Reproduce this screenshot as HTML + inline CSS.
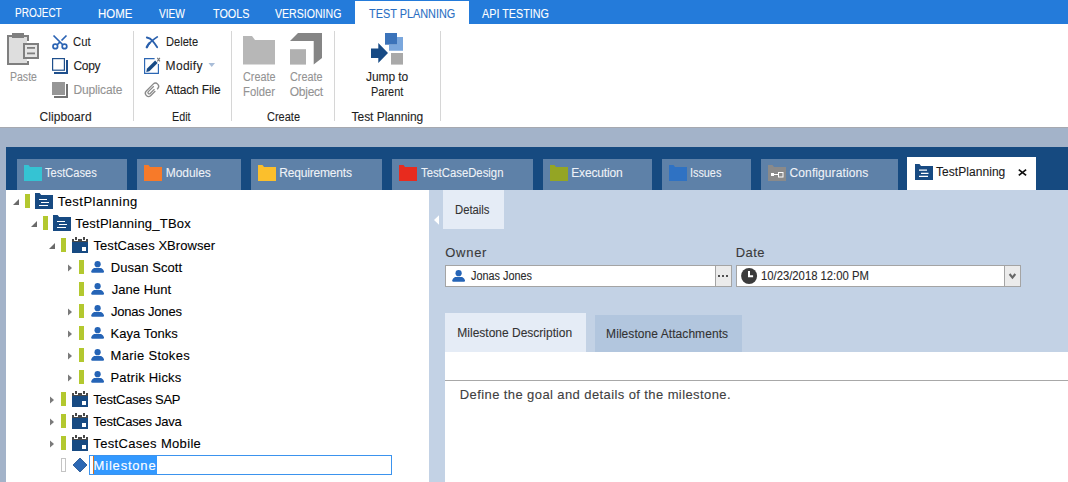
<!DOCTYPE html>
<html><head><meta charset="utf-8"><title>Tosca Commander - TestPlanning</title>
<style>
html,body{margin:0;padding:0;width:1068px;height:482px;overflow:hidden;background:#fff}
body{position:relative;font-family:"Liberation Sans",sans-serif}
.a{position:absolute}
.t{position:absolute;white-space:nowrap;font-family:"Liberation Sans",sans-serif;-webkit-text-stroke:0.1px currentColor}
svg{position:absolute;left:0;top:0}
</style></head><body>
<!-- menu bar -->
<div class="a" style="left:0;top:0;width:1068px;height:24px;background:#247bda"></div>
<div class="a" style="left:355px;top:1px;width:114px;height:23px;background:#fff"></div>
<!-- ribbon -->
<div class="a" style="left:0;top:24px;width:1068px;height:103px;background:#fff"></div>
<div class="a" style="left:133px;top:31px;width:1px;height:90px;background:#d6d6d6"></div>
<div class="a" style="left:231px;top:31px;width:1px;height:90px;background:#d6d6d6"></div>
<div class="a" style="left:334px;top:31px;width:1px;height:90px;background:#d6d6d6"></div>
<div class="a" style="left:440px;top:31px;width:1px;height:90px;background:#d6d6d6"></div>
<!-- gray band -->
<div class="a" style="left:0;top:127px;width:1068px;height:355px;background:#a3b3c9"></div>
<div class="a" style="left:0;top:127px;width:1068px;height:1px;background:#a6a9b0"></div>
<!-- doc tab strip -->
<div class="a" style="left:6px;top:147px;width:1062px;height:43px;background:#164a80"></div>
<div class="a" style="left:17px;top:159px;width:110px;height:31px;background:#5e81a8"></div>
<div class="a" style="left:137px;top:159px;width:104px;height:31px;background:#5e81a8"></div>
<div class="a" style="left:251px;top:159px;width:131px;height:31px;background:#5e81a8"></div>
<div class="a" style="left:392px;top:159px;width:141px;height:31px;background:#5e81a8"></div>
<div class="a" style="left:543px;top:159px;width:109px;height:31px;background:#5e81a8"></div>
<div class="a" style="left:662px;top:159px;width:89px;height:31px;background:#5e81a8"></div>
<div class="a" style="left:761px;top:159px;width:137px;height:31px;background:#5e81a8"></div>
<div class="a" style="left:907px;top:157px;width:129px;height:33px;background:#fff"></div>
<!-- tree panel -->
<div class="a" style="left:6px;top:190px;width:423px;height:292px;background:#fff"></div>
<!-- right panel -->
<div class="a" style="left:429px;top:190px;width:639px;height:292px;background:#c3d2e5"></div>
<div class="a" style="left:443px;top:190px;width:61px;height:39px;background:#e5ecf6"></div>
<div class="a" style="left:445px;top:265px;width:285px;height:20px;background:#fff;border:1px solid #a4a4a4"></div>
<div class="a" style="left:715px;top:265px;width:15px;height:20px;background:#ebebeb;border:1px solid #a4a4a4"></div>
<div class="a" style="left:736px;top:265px;width:283px;height:20px;background:#fff;border:1px solid #a4a4a4"></div>
<div class="a" style="left:1004px;top:265px;width:15px;height:20px;background:#ebebeb;border:1px solid #a4a4a4"></div>
<div class="a" style="left:445px;top:313px;width:141px;height:39px;background:#e5ecf6"></div>
<div class="a" style="left:595px;top:315px;width:147px;height:37px;background:#b2c6de"></div>
<div class="a" style="left:445px;top:352px;width:623px;height:130px;background:#fff"></div>
<div class="a" style="left:445px;top:380px;width:623px;height:1px;background:#a8a8a8"></div>
<!-- milestone edit box -->
<div class="a" style="left:89px;top:455px;width:301px;height:18px;border:1px solid #3b93ee;background:#fff"></div>
<div class="a" style="left:93px;top:456px;width:64px;height:18px;background:#3399ff"></div>
<div class="a" style="left:93px;top:456px;width:1px;height:18px;background:#d8701e"></div>
<svg width="1068" height="482" viewBox="0 0 1068 482">
<!-- ribbon icons -->
<g>
 <rect x="9" y="37" width="18" height="26" fill="#dedede"/>
 <path d="M7 35H29V41H27V37H9V63H27V61H29V65H7Z" fill="#7f7f7f"/>
 <rect x="12" y="33" width="12" height="5" fill="#7f7f7f"/>
 <rect x="23" y="43" width="16" height="16" fill="#7f7f7f"/>
 <rect x="25" y="45" width="12" height="12" fill="#e6e6e6"/>
 <rect x="27" y="47" width="8" height="1.8" fill="#7f7f7f"/>
 <rect x="27" y="52.5" width="8" height="1.8" fill="#7f7f7f"/>
</g>
<g stroke="#2a63b3" stroke-width="1.7" fill="none">
 <path d="M53.5 35.5L62.5 44.5M66.5 35.5L61.5 40.5M59.6 42.4L57 45"/>
 <circle cx="55.3" cy="46.4" r="2.3"/><circle cx="64.5" cy="46.4" r="2.3"/>
</g>
<g>
 <rect x="52.6" y="58.6" width="11.8" height="11.6" fill="none" stroke="#1f4f8c" stroke-width="1.2"/>
 <path d="M66 60h2v14h-14v-2h12z" fill="#1f4f8c"/>
</g>
<g>
 <rect x="52" y="82" width="13" height="13" fill="#969696"/>
 <path d="M66 84h2v14h-14v-2h12z" fill="#727272"/>
</g>
<path d="M146.8 37.5Q150.5 38.3 152.3 40.6Q155 43.6 157.2 47.3" stroke="#2a60ad" stroke-width="1.8" fill="none" stroke-linecap="round"/><path d="M146.8 47.2Q148.8 43 152.3 40.6Q154.8 38.6 157.3 36.9" stroke="#2a60ad" stroke-width="1.7" fill="none" stroke-linecap="round"/><path d="M146.8 47.2Q147.8 44.8 149.6 43" stroke="#2a60ad" stroke-width="2.3" fill="none" stroke-linecap="round"/>
<g>
 <path d="M154.6 58.6H144.6V73.4H158.4V63.9" fill="none" stroke="#2b66b3" stroke-width="1.15"/>
 <path d="M146.3 72l0.6-3.3l8.2-8.2l2.5 2.5l-8.2 8.2z" fill="#174a85"/>
 <path d="M157.3 57.9L159.9 61.3M159.9 57.9L157.3 61.3" stroke="#777" stroke-width="1.1"/>
</g>
<path d="M208.5 63h6.5l-3.25 4z" fill="#a9bdd8"/>
<path transform="translate(152 89.8) rotate(45) translate(-3.2 -8)" d="M6.4 6.5V12.8A3.2 3.2 0 0 1 0 12.8V3.2A3.2 3.2 0 0 1 6.4 3.2V4M1.9 4.2V11.9A1.3 1.3 0 0 0 4.5 11.9V5.8" fill="none" stroke="#8a8a8a" stroke-width="1.3"/>
<path d="M243 36h9l3 4h20v24.6h-32z" fill="#b7b7b7"/>
<path d="M298 33h24v25l-8.3 6.6v-23.6h-23.7z" fill="#858585"/>
<rect x="290" y="49.2" width="16" height="15.4" fill="#b0b0b0"/>
<rect x="385" y="33" width="12" height="11.7" fill="#3b73ba"/>
<path d="M397 37h6v13.7h-14v-6h8z" fill="#7aa7dd"/>
<rect x="391" y="53" width="12" height="11.6" fill="#a9a9a9"/>
<path d="M371 48.6h7.3v-5.6l9.7 10l-9.7 10v-5.1h-7.3z" fill="#174a85"/>
<!-- doc tab icons -->
<path d="M24 165h4.5l1.5 2h12v14h-18z" fill="#35c3d3"/>
<path d="M144 165h4.5l1.5 2h12v14h-18z" fill="#f77a29"/>
<path d="M258 165h4.5l1.5 2h12v14h-18z" fill="#fbbf2c"/>
<path d="M399 165h4.5l1.5 2h12v14h-18z" fill="#e82b1e"/>
<path d="M550 165h4.5l1.5 2h12v14h-18z" fill="#94a524"/>
<path d="M669 165h4.5l1.5 2h12v14h-18z" fill="#2f72c3"/>
<path d="M768 165h4.5l1.5 2h12v14h-18z" fill="#8a8a8a"/>
<rect x="771" y="173" width="3" height="3" fill="#fff"/>
<path d="M774 174.5h4" stroke="#fff" stroke-width="1"/>
<rect x="778.5" y="172.5" width="4.5" height="4.5" fill="none" stroke="#fff" stroke-width="1"/>
<path d="M915 164h4.5l1.5 2h12v14h-18z" fill="#174a82"/>
<path d="M919 170.2h8M921 173.3h7.5M919 176.4h9" stroke="#fff" stroke-width="1.2"/>
<path d="M1018.8 169.6L1026.1 175.4M1026.1 169.6L1018.8 175.4" stroke="#111" stroke-width="1.75"/>
<!-- right panel bits -->
<path d="M439 215.3v9.4l-5-4.7z" fill="#fff"/>
<rect x="718" y="275" width="2" height="2" fill="#505050"/><rect x="722" y="275" width="2" height="2" fill="#505050"/><rect x="726" y="275" width="2" height="2" fill="#505050"/>
<circle cx="458.6" cy="273.2" r="3.1" fill="#2564b6"/><path transform="translate(452 270)" d="M0.2 10.3Q0.7 8.3 3 7H10.2Q12.5 8.3 13 10.3V10.7Q13 11.8 11.9 11.8H1.3Q0.2 11.8 0.2 10.7Z" fill="#2564b6"/>
<circle cx="749.1" cy="276" r="8" fill="#3b3b3b"/>
<path d="M748 271h2v4.2h3.1v2h-5.1z" fill="#fff"/>
<path d="M1009.6 274l2.85 3.6l2.85-3.6" stroke="#676767" stroke-width="2.1" fill="none"/>
<!-- tree -->
<path d="M19 199v6h-6z" fill="#6a6a6a"/>
<rect x="25" y="194" width="5" height="14" fill="#b3c82f"/>
<path d="M35 193h4.6l1.6 2h11.8v14h-18z" fill="#174a82"/><path d="M39 199.5h8M41 202.5h8M39 205.5h9" stroke="#fff" stroke-width="1.2"/>
<path d="M37 221v6h-6z" fill="#6a6a6a"/>
<rect x="43" y="216" width="5" height="14" fill="#b3c82f"/>
<path d="M53 215h4.6l1.6 2h11.8v14h-18z" fill="#174a82"/><path d="M57 221.5h8M59 224.5h8M57 227.5h9" stroke="#fff" stroke-width="1.2"/>
<path d="M55 243v6h-6z" fill="#6a6a6a"/>
<rect x="61" y="238" width="5" height="14" fill="#b3c82f"/>
<rect x="72" y="242" width="16" height="11" fill="#174a82"/><path d="M72 239h2v2h4v-2h4v2h4v-2h2v3h-16z" fill="#484848"/><path d="M75 237h2v3h-2zM83 237h2v3h-2z" fill="#484848"/><rect x="82" y="247" width="4" height="4" fill="#fff"/>
<path d="M68 264.5l4 3.5l-4 3.5z" fill="#7a7a7a"/>
<rect x="79" y="260" width="5" height="14" fill="#b3c82f"/>
<circle cx="97.6" cy="264.2" r="3.1" fill="#2564b6"/><path transform="translate(91 261)" d="M0.2 10.3Q0.7 8.3 3 7H10.2Q12.5 8.3 13 10.3V10.7Q13 11.8 11.9 11.8H1.3Q0.2 11.8 0.2 10.7Z" fill="#2564b6"/>
<rect x="79" y="282" width="5" height="14" fill="#b3c82f"/>
<circle cx="97.6" cy="286.2" r="3.1" fill="#2564b6"/><path transform="translate(91 283)" d="M0.2 10.3Q0.7 8.3 3 7H10.2Q12.5 8.3 13 10.3V10.7Q13 11.8 11.9 11.8H1.3Q0.2 11.8 0.2 10.7Z" fill="#2564b6"/>
<path d="M68 308.5l4 3.5l-4 3.5z" fill="#7a7a7a"/>
<rect x="79" y="304" width="5" height="14" fill="#b3c82f"/>
<circle cx="97.6" cy="308.2" r="3.1" fill="#2564b6"/><path transform="translate(91 305)" d="M0.2 10.3Q0.7 8.3 3 7H10.2Q12.5 8.3 13 10.3V10.7Q13 11.8 11.9 11.8H1.3Q0.2 11.8 0.2 10.7Z" fill="#2564b6"/>
<path d="M68 330.5l4 3.5l-4 3.5z" fill="#7a7a7a"/>
<rect x="79" y="326" width="5" height="14" fill="#b3c82f"/>
<circle cx="97.6" cy="330.2" r="3.1" fill="#2564b6"/><path transform="translate(91 327)" d="M0.2 10.3Q0.7 8.3 3 7H10.2Q12.5 8.3 13 10.3V10.7Q13 11.8 11.9 11.8H1.3Q0.2 11.8 0.2 10.7Z" fill="#2564b6"/>
<path d="M68 352.5l4 3.5l-4 3.5z" fill="#7a7a7a"/>
<rect x="79" y="348" width="5" height="14" fill="#b3c82f"/>
<circle cx="97.6" cy="352.2" r="3.1" fill="#2564b6"/><path transform="translate(91 349)" d="M0.2 10.3Q0.7 8.3 3 7H10.2Q12.5 8.3 13 10.3V10.7Q13 11.8 11.9 11.8H1.3Q0.2 11.8 0.2 10.7Z" fill="#2564b6"/>
<path d="M68 374.5l4 3.5l-4 3.5z" fill="#7a7a7a"/>
<rect x="79" y="370" width="5" height="14" fill="#b3c82f"/>
<circle cx="97.6" cy="374.2" r="3.1" fill="#2564b6"/><path transform="translate(91 371)" d="M0.2 10.3Q0.7 8.3 3 7H10.2Q12.5 8.3 13 10.3V10.7Q13 11.8 11.9 11.8H1.3Q0.2 11.8 0.2 10.7Z" fill="#2564b6"/>
<path d="M50 396.5l4 3.5l-4 3.5z" fill="#7a7a7a"/>
<rect x="61" y="392" width="5" height="14" fill="#b3c82f"/>
<rect x="72" y="396" width="16" height="11" fill="#174a82"/><path d="M72 393h2v2h4v-2h4v2h4v-2h2v3h-16z" fill="#484848"/><path d="M75 391h2v3h-2zM83 391h2v3h-2z" fill="#484848"/><rect x="82" y="401" width="4" height="4" fill="#fff"/>
<path d="M50 418.5l4 3.5l-4 3.5z" fill="#7a7a7a"/>
<rect x="61" y="414" width="5" height="14" fill="#b3c82f"/>
<rect x="72" y="418" width="16" height="11" fill="#174a82"/><path d="M72 415h2v2h4v-2h4v2h4v-2h2v3h-16z" fill="#484848"/><path d="M75 413h2v3h-2zM83 413h2v3h-2z" fill="#484848"/><rect x="82" y="423" width="4" height="4" fill="#fff"/>
<path d="M50 440.5l4 3.5l-4 3.5z" fill="#7a7a7a"/>
<rect x="61" y="436" width="5" height="14" fill="#b3c82f"/>
<rect x="72" y="440" width="16" height="11" fill="#174a82"/><path d="M72 437h2v2h4v-2h4v2h4v-2h2v3h-16z" fill="#484848"/><path d="M75 435h2v3h-2zM83 435h2v3h-2z" fill="#484848"/><rect x="82" y="445" width="4" height="4" fill="#fff"/>
<rect x="61.5" y="458.5" width="4" height="13" fill="none" stroke="#c4c4c4"/>
<path d="M80 458l7 7l-7 7l-7-7z" fill="#2c68b4" stroke="#1d4e8e" stroke-width="0.8"/>
</svg>
<span class="t" style="left:15.40px;top:6.00px;font-size:12px;line-height:15px;transform:scaleX(0.8346);transform-origin:0 0;color:#ffffff">PROJECT</span>
<span class="t" style="left:98.40px;top:7.00px;font-size:12px;line-height:15px;transform:scaleX(0.9529);transform-origin:0 0;color:#ffffff">HOME</span>
<span class="t" style="left:159.30px;top:7.00px;font-size:12px;line-height:15px;transform:scaleX(0.8455);transform-origin:0 0;color:#ffffff">VIEW</span>
<span class="t" style="left:212.60px;top:7.00px;font-size:12px;line-height:15px;transform:scaleX(0.9022);transform-origin:0 0;color:#ffffff">TOOLS</span>
<span class="t" style="left:275.40px;top:7.00px;font-size:12px;line-height:15px;transform:scaleX(0.8812);transform-origin:0 0;color:#ffffff">VERSIONING</span>
<span class="t" style="left:369.00px;top:7.00px;font-size:12px;line-height:15px;transform:scaleX(0.9072);transform-origin:0 0;color:#2a6fc4">TEST PLANNING</span>
<span class="t" style="left:482.00px;top:7.00px;font-size:12px;line-height:15px;transform:scaleX(0.8985);transform-origin:0 0;color:#ffffff">API TESTING</span>
<span class="t" style="left:9.80px;top:70.00px;font-size:12px;line-height:15px;transform:scaleX(0.8771);transform-origin:0 0;color:#939393">Paste</span>
<span class="t" style="left:73.40px;top:35.00px;font-size:12px;line-height:15px;transform:scaleX(0.9411);transform-origin:0 0;color:#1e1e1e">Cut</span>
<span class="t" style="left:73.40px;top:59.00px;font-size:12px;line-height:15px;letter-spacing:-0.271px;color:#1e1e1e">Copy</span>
<span class="t" style="left:73.40px;top:83.00px;font-size:12px;line-height:15px;letter-spacing:-0.132px;color:#939393">Duplicate</span>
<span class="t" style="left:165.60px;top:35.00px;font-size:12px;line-height:15px;transform:scaleX(0.9254);transform-origin:0 0;color:#1e1e1e">Delete</span>
<span class="t" style="left:165.60px;top:59.00px;font-size:12px;line-height:15px;letter-spacing:0.311px;color:#1e1e1e">Modify</span>
<span class="t" style="left:165.60px;top:83.00px;font-size:12px;line-height:15px;letter-spacing:-0.172px;color:#1e1e1e">Attach File</span>
<span class="t" style="left:242.70px;top:70.00px;font-size:12px;line-height:15px;transform:scaleX(0.9052);transform-origin:0 0;color:#939393">Create</span>
<span class="t" style="left:242.70px;top:85.00px;font-size:12px;line-height:15px;transform:scaleX(0.9407);transform-origin:0 0;color:#939393">Folder</span>
<span class="t" style="left:289.80px;top:70.00px;font-size:12px;line-height:15px;transform:scaleX(0.9052);transform-origin:0 0;color:#939393">Create</span>
<span class="t" style="left:289.80px;top:85.00px;font-size:12px;line-height:15px;letter-spacing:-0.270px;color:#939393">Object</span>
<span class="t" style="left:366.00px;top:70.00px;font-size:12px;line-height:15px;letter-spacing:-0.085px;color:#1e1e1e">Jump to</span>
<span class="t" style="left:370.90px;top:85.00px;font-size:12px;line-height:15px;transform:scaleX(0.9133);transform-origin:0 0;color:#1e1e1e">Parent</span>
<span class="t" style="left:39.40px;top:110.00px;font-size:12px;line-height:15px;letter-spacing:0.101px;color:#1e1e1e">Clipboard</span>
<span class="t" style="left:172.30px;top:110.00px;font-size:12px;line-height:15px;transform:scaleX(0.8949);transform-origin:0 0;color:#1e1e1e">Edit</span>
<span class="t" style="left:266.70px;top:110.00px;font-size:12px;line-height:15px;transform:scaleX(0.9163);transform-origin:0 0;color:#1e1e1e">Create</span>
<span class="t" style="left:351.50px;top:110.00px;font-size:12px;line-height:15px;letter-spacing:-0.023px;color:#1e1e1e">Test Planning</span>
<span class="t" style="left:45.30px;top:166.00px;font-size:12px;line-height:15px;transform:scaleX(0.9246);transform-origin:0 0;color:#eef2f7">TestCases</span>
<span class="t" style="left:165.70px;top:166.00px;font-size:12px;line-height:15px;letter-spacing:-0.043px;color:#eef2f7">Modules</span>
<span class="t" style="left:279.30px;top:166.00px;font-size:12px;line-height:15px;letter-spacing:-0.191px;color:#eef2f7">Requirements</span>
<span class="t" style="left:420.70px;top:166.00px;font-size:12px;line-height:15px;transform:scaleX(0.9435);transform-origin:0 0;color:#eef2f7">TestCaseDesign</span>
<span class="t" style="left:571.30px;top:166.00px;font-size:12px;line-height:15px;letter-spacing:-0.178px;color:#eef2f7">Execution</span>
<span class="t" style="left:689.60px;top:166.00px;font-size:12px;line-height:15px;transform:scaleX(0.9026);transform-origin:0 0;color:#eef2f7">Issues</span>
<span class="t" style="left:789.60px;top:166.00px;font-size:12px;line-height:15px;letter-spacing:0.094px;color:#eef2f7">Configurations</span>
<span class="t" style="left:936.00px;top:165.00px;font-size:12px;line-height:15px;letter-spacing:0.051px;color:#1a1a1a">TestPlanning</span>
<span class="t" style="left:57.70px;top:194.00px;font-size:13px;line-height:16px;letter-spacing:0.472px;color:#000000">TestPlanning</span>
<span class="t" style="left:75.20px;top:216.00px;font-size:13px;line-height:16px;letter-spacing:0.224px;color:#000000">TestPlanning_TBox</span>
<span class="t" style="left:93.50px;top:238.00px;font-size:13px;line-height:16px;letter-spacing:0.058px;color:#000000">TestCases XBrowser</span>
<span class="t" style="left:110.70px;top:260.00px;font-size:13px;line-height:16px;letter-spacing:0.060px;color:#000000">Dusan Scott</span>
<span class="t" style="left:111.70px;top:282.00px;font-size:13px;line-height:16px;letter-spacing:0.031px;color:#000000">Jane Hunt</span>
<span class="t" style="left:111.00px;top:304.00px;font-size:13px;line-height:16px;letter-spacing:-0.209px;color:#000000">Jonas Jones</span>
<span class="t" style="left:110.50px;top:326.00px;font-size:13px;line-height:16px;letter-spacing:0.033px;color:#000000">Kaya Tonks</span>
<span class="t" style="left:110.50px;top:348.00px;font-size:13px;line-height:16px;letter-spacing:0.304px;color:#000000">Marie Stokes</span>
<span class="t" style="left:110.50px;top:370.00px;font-size:13px;line-height:16px;letter-spacing:0.198px;color:#000000">Patrik Hicks</span>
<span class="t" style="left:93.30px;top:392.00px;font-size:13px;line-height:16px;letter-spacing:-0.262px;color:#000000">TestCases SAP</span>
<span class="t" style="left:93.30px;top:414.00px;font-size:13px;line-height:16px;letter-spacing:-0.256px;color:#000000">TestCases Java</span>
<span class="t" style="left:93.30px;top:436.00px;font-size:13px;line-height:16px;letter-spacing:0.329px;color:#000000">TestCases Mobile</span>
<span class="t" style="left:93.60px;top:458.00px;font-size:13px;line-height:16px;letter-spacing:0.799px;color:#ffffff">Milestone</span>
<span class="t" style="left:455.40px;top:203.00px;font-size:12px;line-height:15px;transform:scaleX(0.9406);transform-origin:0 0;color:#333333">Details</span>
<span class="t" style="left:445.30px;top:245.00px;font-size:13px;line-height:16px;letter-spacing:0.710px;color:#3a3a3a">Owner</span>
<span class="t" style="left:735.70px;top:245.00px;font-size:13px;line-height:16px;letter-spacing:0.423px;color:#3a3a3a">Date</span>
<span class="t" style="left:470.90px;top:269.00px;font-size:12px;line-height:15px;transform:scaleX(0.9054);transform-origin:0 0;color:#2a2a2a">Jonas Jones</span>
<span class="t" style="left:761.00px;top:269.00px;font-size:12px;line-height:15px;transform:scaleX(0.9394);transform-origin:0 0;color:#2a2a2a">10/23/2018 12:00 PM</span>
<span class="t" style="left:457.30px;top:326.00px;font-size:12px;line-height:15px;letter-spacing:0.003px;color:#333333">Milestone Description</span>
<span class="t" style="left:606.10px;top:327.00px;font-size:12px;line-height:15px;letter-spacing:0.061px;color:#333333">Milestone Attachments</span>
<span class="t" style="left:459.80px;top:387.00px;font-size:13px;line-height:16px;letter-spacing:0.404px;color:#404040">Define the goal and details of the milestone.</span>
</body></html>
